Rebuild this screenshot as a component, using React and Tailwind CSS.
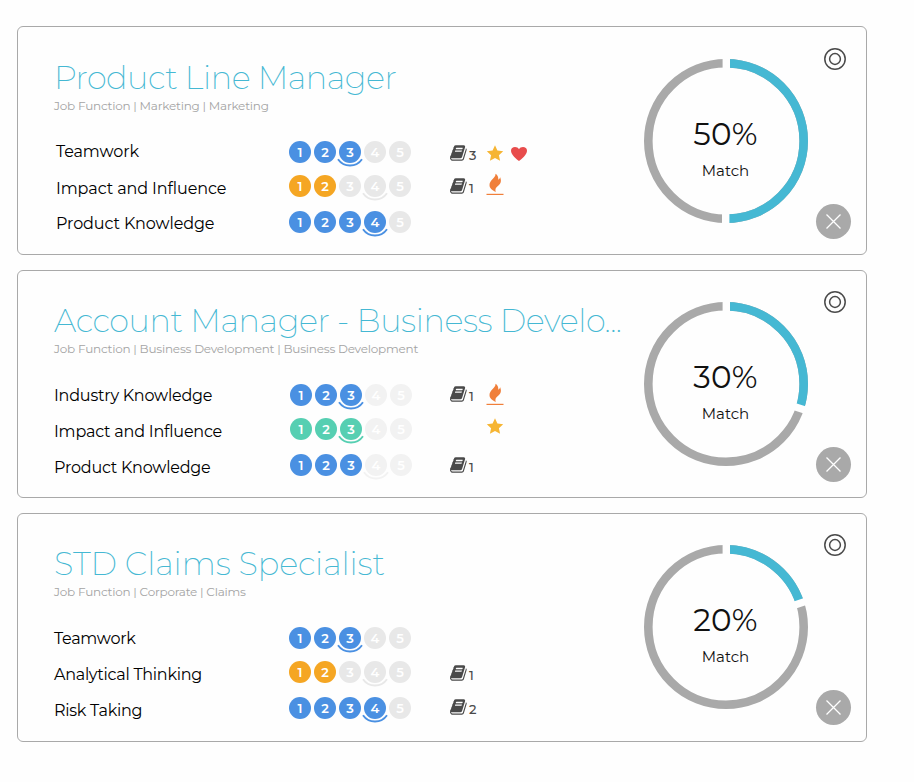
const BLUE = '#4a90e2';
const ORANGE = '#f5a623';
const GREEN = '#56cfb2';

const jobs = [
  {
    title: 'Product Line Manager',
    path: 'Job Function | Marketing | Marketing',
    match: 50,
    card: 'h-[229px] pt-px',
    heading: 'tracking-[-0.48px]',
    names: 'pl-[38px] tracking-[-0.1px]',
    nameRows: ['h-[37px]', 'h-[35px]', 'h-9'],
    levels: 'pl-0',
    books: 'pt-0.5',
    bookRows: ['h-[33px]', 'h-9', 'h-9'],
    extras: '',
    extraRows: ['h-8', 'h-9', 'h-9'],
    empty: '#e8e8e8',
    skills: [
      { name: 'Teamwork', level: 3, goal: 3, color: BLUE, books: 3, extras: ['star', 'heart'] },
      { name: 'Impact and Influence', level: 2, goal: 4, color: ORANGE, books: 1, extras: ['fire'] },
      { name: 'Product Knowledge', level: 4, goal: 4, color: BLUE, extras: [] },
    ],
  },
  {
    title: 'Account Manager - Business Develo...',
    path: 'Job Function | Business Development | Business Development',
    match: 30,
    card: 'h-[228px]',
    heading: 'tracking-[-0.42px]',
    names: 'pl-9 pt-px tracking-[-0.21px]',
    nameRows: ['h-9', 'h-9', 'h-9'],
    levels: 'pl-px',
    books: '',
    bookRows: ['h-[35px]', 'h-9', 'h-9'],
    extras: '-mt-px',
    extraRows: ['h-[31px]', 'h-9', 'h-9'],
    empty: '#f2f2f2',
    skills: [
      { name: 'Industry Knowledge', level: 3, goal: 3, color: BLUE, books: 1, extras: ['fire'] },
      { name: 'Impact and Influence', level: 3, goal: 3, color: GREEN, extras: ['star'] },
      { name: 'Product Knowledge', level: 3, goal: 4, color: BLUE, books: 1, extras: [] },
    ],
  },
  {
    title: 'STD Claims Specialist',
    path: 'Job Function | Corporate | Claims',
    match: 20,
    card: 'h-[229px]',
    heading: 'tracking-[-0.12px]',
    names: 'pl-9 pt-px tracking-[-0.28px]',
    nameRows: ['h-9', 'h-9', 'h-9'],
    levels: 'pl-0',
    books: '',
    bookRows: ['h-9', 'h-[34px]', 'h-9'],
    extras: '',
    extraRows: ['h-9', 'h-9', 'h-9'],
    empty: '#e8e8e8',
    skills: [
      { name: 'Teamwork', level: 3, goal: 3, color: BLUE, extras: [] },
      { name: 'Analytical Thinking', level: 2, goal: 4, color: ORANGE, books: 1, extras: [] },
      { name: 'Risk Taking', level: 4, goal: 4, color: BLUE, books: 2, extras: [] },
    ],
  },
];

const BookIcon = () => (
  <svg viewBox="0 0 1792 1792" className="h-[18px] w-[18px] shrink-0" fill="#4a4a4a">
    <path d="M1639 478q40 57 18 129l-275 906q-19 64-76.5 107.5t-122.5 43.5h-923q-77 0-148.5-53.5t-99.5-131.5q-24-67-2-127 0-4 3-27t4-37q1-8-3-21.5t-3-19.5q2-11 8-21t16.5-23.5 16.5-23.5q23-38 45-91.5t30-91.5q3-10 .5-30t-.5-28q3-11 17-28t17-23q21-36 42-92t25-90q1-9-2.5-32t.5-28q4-13 22-30.5t22-22.5q19-26 42.5-84.5t27.5-96.5q1-8-3-25.5t-2-26.5q2-8 9-18t18-23 17-21q8-12 16.5-30.5t15-35 16-36 19.5-32 26.5-23.5 36-11.5 47.5 5.5l-1 3q38-9 51-9h761q74 0 114 56t18 130l-274 906q-36 119-71.5 153.5t-128.5 34.5h-869q-27 0-38 15-11 16-1 43 24 70 144 70h923q29 0 56-15.5t35-41.5l300-987q7-22 5-57 38 15 59 43zm-1064 2q-4 13 2 22.5t20 9.5h608q13 0 25.5-9.5t16.5-22.5l21-64q4-13-2-22.5t-20-9.5h-608q-13 0-25.5 9.5t-16.5 22.5zm-83 256q-4 13 2 22.5t20 9.5h608q13 0 25.5-9.5t16.5-22.5l21-64q4-13-2-22.5t-20-9.5h-608q-13 0-25.5 9.5t-16.5 22.5z" />
  </svg>
);

const extraIcons = {
  star: (
    <svg viewBox="0 0 18 24" className="h-6 w-[18px]" fill="#f6b533">
      <path d="M9 4.3l2.400 5.300 5.800.6-4.300 4 1.200 5.600L9 17l-5.100 2.800 1.200-5.600-4.300-4 5.800-.6z" />
    </svg>
  ),
  heart: (
    <svg viewBox="0 0 18 24" className="h-6 w-[18px]" fill="#e84c4c">
      <path d="M9 20C6.500 18.200 1 13.500 1 9.700 1 7.300 2.800 6 5 6c1.800 0 3.200.8 4 2.300C9.800 6.800 11.200 6 13 6c2.200 0 4 1.300 4 3.700C17 13.500 11.500 18.200 9 20z" />
    </svg>
  ),
  fire: (
    <svg viewBox="0 0 18 24" className="h-6 w-[18px]" fill="#f07f3a">
      <path d="M9.500.7C10 5 3.500 6.800 3.500 12c0 3.200 2.400 5 6.300 6.900-.9-2.600-.3-4.200 1.800-5.700 3.500-2.500 4-5 2.600-8.900-.4 1.300-1 2-1.900 2.400C12.500 4 11.600 2 9.500.7z" />
      <rect x="0.500" y="20.800" width="17" height="1.200" />
    </svg>
  ),
};

const Levels = ({ skill, empty }) => (
  <div className="flex gap-[3px]">
    {[1, 2, 3, 4, 5].map(n => (
      <div
        key={n}
        className="relative flex size-[22px] items-center justify-center rounded-full pt-px text-[13px] font-semibold text-white"
        style={{ backgroundColor: n <= skill.level ? skill.color : empty }}
      >
        {n}
        {n === skill.goal && (
          <svg viewBox="0 0 26 9" className="absolute -left-0.5 top-[17px] h-[9px] w-[26px]" fill="none">
            <path
              d="M1 1.200Q5.400 7.500 13 7.500T25 1.200"
              stroke={n <= skill.level ? skill.color : empty}
              strokeWidth="1.900"
            />
          </svg>
        )}
      </div>
    ))}
  </div>
);

const MatchRing = ({ value }) => (
  <div className="relative size-[164px]">
    <svg viewBox="-82 -82 164 164" className="size-[164px]" fill="none">
      <circle r="77.700" stroke="#a9a9a9" strokeWidth="8.600" />
      <circle
        r="77.700"
        stroke="#45b8d3"
        strokeWidth="8.600"
        pathLength="100"
        strokeDasharray={`${value} 100`}
        transform="rotate(-90)"
      />
      <path d="M0.300 -70V-84" stroke="#fefefe" strokeWidth="7.400" />
      <path d="M0.300 -70V-84" stroke="#fefefe" strokeWidth="7.400" transform={`rotate(${value * 3.6})`} />
    </svg>
    <div className="absolute inset-0 flex flex-col items-center pt-[57px] pr-px text-[#111]">
      <span className="text-[31px] leading-9 tracking-[0.3px]">{value}%</span>
      <span className="mt-[9px] text-[15px] leading-5">Match</span>
    </div>
  </div>
);

const JobCard = ({ job }) => (
  <div className={`flex w-[850px] rounded-md border border-[#a9a9a9] bg-[#fefefe] ${job.card}`}>
    <div className="w-[610px] shrink-0">
      <div className="pt-[30px] pl-9 whitespace-nowrap">
        <h2 className={`h-10 text-[32px] leading-10 font-extralight text-[#45b8d3] ${job.heading}`}>{job.title}</h2>
        <p className="h-4 text-xs leading-4 tracking-[-0.21px] text-[#a4a4a4]">{job.path}</p>
      </div>
      <div className="flex pt-[27px]">
        <div className={`w-[271px] shrink-0 text-black ${job.names}`}>
          {job.skills.map((skill, i) => (
            <div key={skill.name} className={`whitespace-nowrap text-base leading-[22px] ${job.nameRows[i]}`}>
              {skill.name}
            </div>
          ))}
        </div>
        <div className={`w-[161px] shrink-0 ${job.levels}`}>
          {job.skills.map((skill, i) => (
            <div key={skill.name} className={i === 0 ? 'h-[34px]' : 'h-9'}>
              <Levels skill={skill} empty={job.empty} />
            </div>
          ))}
        </div>
        <div className={`w-9 shrink-0 text-[#4a4a4a] ${job.books}`}>
          {job.skills.map((skill, i) => (
            <div key={skill.name} className={`flex pt-px ${job.bookRows[i]}`}>
              {skill.books && <BookIcon />}
              {skill.books && <span className="pt-[3px] pl-px text-[13px] leading-4 font-medium">{skill.books}</span>}
            </div>
          ))}
        </div>
        <div className={job.extras}>
          {job.skills.map((skill, i) => (
            <div key={skill.name} className={`flex gap-1.5 ${job.extraRows[i]}`}>
              {skill.extras.map(name => (
                <span key={name}>{extraIcons[name]}</span>
              ))}
            </div>
          ))}
        </div>
      </div>
    </div>
    <div className="w-[188px] shrink-0 pt-[31px] pl-4">
      <MatchRing value={job.match} />
    </div>
    <div className="flex flex-col items-center pt-[19px]">
      <svg viewBox="0 0 24 24" className="ml-[3px] size-6" fill="none" stroke="#4a4a4a" strokeWidth="1.500">
        <circle cx="12" cy="12" r="10.200" />
        <circle cx="12" cy="12" r="5.400" />
      </svg>
      <button className="mt-[133px] flex size-[35px] items-center justify-center rounded-full bg-[#a9a9a9]">
        <svg viewBox="0 0 15 15" className="size-[15px]" stroke="#fff" strokeWidth="1.300">
          <path d="M0.500 0.500L14.500 14.500M14.500 0.500L0.500 14.500" />
        </svg>
      </button>
    </div>
  </div>
);

const App = () => (
  <div className="flex h-[782px] w-[914px] flex-col gap-[15px] bg-[#fefefe] pt-[26px] pl-[17px] font-['Montserrat','Inter',sans-serif]">
    {jobs.map(job => (
      <JobCard key={job.title} job={job} />
    ))}
  </div>
);

export default App;
